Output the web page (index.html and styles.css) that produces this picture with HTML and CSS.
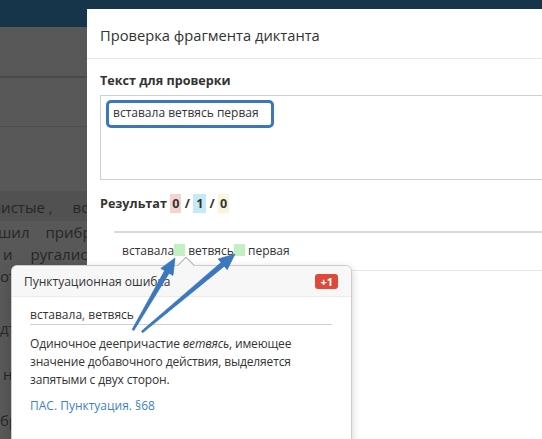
FILE: index.html
```html
<!DOCTYPE html>
<html lang="ru">
<head>
<meta charset="utf-8">
<link rel="stylesheet" href="styles.css">
</head>
<body>
<div class="page">
  <div class="topbar"></div>
  <div class="band band1"></div>
  <div class="band band2"></div>
  <div class="bgtext">
    <div class="row row-dark"><span class="w1">чистые ,</span><span class="w2">воробьи</span></div>
    <div class="row"><span class="w1b">шил</span><span class="w2b">прибрал</span></div>
    <div class="row"><span class="w1c">и</span><span class="w2c">ругались</span></div>
    <div class="row"><span>от</span></div>
    <div class="row gap1"><span>дт</span></div>
    <div class="row gap2"><span class="w1c">н</span></div>
    <div class="row gap2"><span>бр</span></div>
  </div>
</div>

<div class="modal">
  <div class="modal-header">Проверка фрагмента диктанта</div>
  <div class="modal-body">
    <div class="label">Текст для проверки</div>
    <div class="textarea"><div class="hl">вставала ветвясь первая</div></div>
    <div class="label result-label">Результат <span class="num n-red">0</span> / <span class="num n-blue">1</span> / <span class="num n-yellow">0</span></div>
    <div class="result"><span>вставала</span><span class="gap-mark"></span> <span>ветвясь</span><span class="gap-mark"></span> <span>первая</span></div>
  </div>
</div>

<div class="popover">
  <div class="caret"></div>
  <div class="pop-header"><span>Пунктуационная ошибка</span><span class="badge">+1</span></div>
  <div class="pop-body">
    <div class="fixed">вставала<span class="comma">,</span> ветвясь</div>
    <p class="explain">Одиночное деепричастие <em>ветвясь</em>, имеющее значение добавочного действия, выделяется запятыми с двух сторон.</p>
    <a class="rule">ПАС. Пунктуация. §68</a>
  </div>
</div>

<svg class="arrows" width="542" height="439" viewBox="0 0 542 439">
  <polygon points="133.9,330.5 169.1,273.2 173.0,275.4 175,258 160.8,268.4 164.7,270.6 132.1,329.5" fill="#3a79c0" stroke="#2f68aa" stroke-width="0.6"/>
  <polygon points="142.6,332.8 224.3,266.2 227.2,269.7 235,254 218.2,258.9 221.1,262.4 141.4,331.2" fill="#3a79c0" stroke="#2f68aa" stroke-width="0.6"/>
</svg>
</body>
</html>
```

FILE: styles.css
```css
* { box-sizing: border-box; }
html, body {
  margin: 0;
  padding: 0;
  width: 542px;
  height: 439px;
  overflow: hidden;
  background: #585858;
  font-family: "Open Sans", "DejaVu Sans", sans-serif;
  color: #333;
}
.page { width: 542px; height: 439px; }
.topbar { height: 27px; background: #17354a; }
.band1 { height: 51px; border-bottom: 2px solid #4a4a4a; }
.band2 { height: 49px; border-bottom: 1px solid #4e4e4e; }
.bgtext {
  padding-top: 70px;
  font-size: 15px;
  color: #262626;
  line-height: 22px;
}
.row { height: 22px; white-space: nowrap; }
.row-dark { background: #515151; height: 30px; line-height: 32px; margin-top: -6px; }
.w1 { margin-left: -8px; }
.w2 { margin-left: 20px; }
.w1b { margin-left: -2px; }
.w2b { margin-left: 16px; }
.w1c { margin-left: 3px; }
.w2c { margin-left: 18px; }
.gap1 { margin-top: 30px; }
.gap2 { margin-top: 24px; }

.modal {
  position: absolute;
  left: 87px;
  top: 9px;
  width: 600px;
  height: 440px;
  background: #fff;
}
.modal-header {
  height: 50px;
  border-bottom: 1px solid #e8e8e8;
  padding: 0 13px;
  font-size: 14.7px;
  line-height: 52px;
  color: #333;
}
.modal-body { padding: 13px 13px 0; }
.label {
  font-size: 12.6px;
  font-weight: 700;
  color: #333;
  line-height: 18px;
}
.textarea {
  margin-top: 5px;
  height: 85px;
  border: 1px solid #ccd2db;
  padding: 4px 5px;
}
.hl {
  width: 168px;
  height: 28px;
  border: 3px solid #3a78b8;
  border-radius: 5px;
  font-size: 12px;
  line-height: 20px;
  padding-left: 4px;
  color: #333;
}
.result-label { margin-top: 14px; }
.num {
  display: inline-block;
  padding: 0 2px;
  line-height: 19px;
}
.n-red { background: #f3d4cf; }
.n-blue { background: #c4eaf8; padding: 0 3px; }
.n-yellow { background: #faf4da; }

.result {
  margin: 18px 0 0 14px;
  height: 40px;
  border-top: 2px solid #d6dbe2;
  border-bottom: 1px solid #e6e6e6;
  padding-left: 8px;
  font-size: 12px;
  line-height: 36px;
  color: #333;
}
.gap-mark {
  display: inline-block;
  width: 11px;
  height: 12px;
  background: #c3f0c3;
  vertical-align: -1px;
}

.popover {
  position: absolute;
  left: 11px;
  top: 265px;
  width: 341px;
  height: 190px;
  background: #fff;
  border: 1px solid rgba(0,0,0,0.2);
  border-radius: 6px;
  box-shadow: 0 3px 9px rgba(0,0,0,0.2);
}
.caret {
  position: absolute;
  left: 168px;
  top: -7px;
  width: 12px;
  height: 12px;
  background: #f7f7f7;
  border-left: 1px solid rgba(0,0,0,0.3);
  border-top: 1px solid rgba(0,0,0,0.3);
  transform: rotate(45deg);
}
.pop-header {
  position: relative;
  height: 31px;
  background: #f7f7f7;
  border-bottom: 1px solid #ebebeb;
  border-radius: 5px 5px 0 0;
  padding: 0 13px 0 12px;
  display: flex;
  align-items: center;
  justify-content: space-between;
  font-size: 12px;
  color: #333;
}
.badge {
  background: #dd4a39;
  color: #fff;
  font-weight: 700;
  font-size: 11px;
  line-height: 15px;
  height: 15px;
  padding: 0 5px;
  border-radius: 3px;
}
.pop-body { padding: 9px 19px 0 18px; font-size: 12px; color: #333; }
.fixed {
  line-height: 17px;
  padding-bottom: 1px;
  border-bottom: 1px solid #cfcfcf;
}
.comma { color: #e02020; }
.explain {
  margin: 10px 0 0;
  line-height: 18px;
  letter-spacing: -0.15px;
}
.rule {
  display: block;
  margin-top: 8px;
  color: #3f7fbf;
  line-height: 18px;
}
.arrows {
  position: absolute;
  left: 0;
  top: 0;
  pointer-events: none;
}
```
